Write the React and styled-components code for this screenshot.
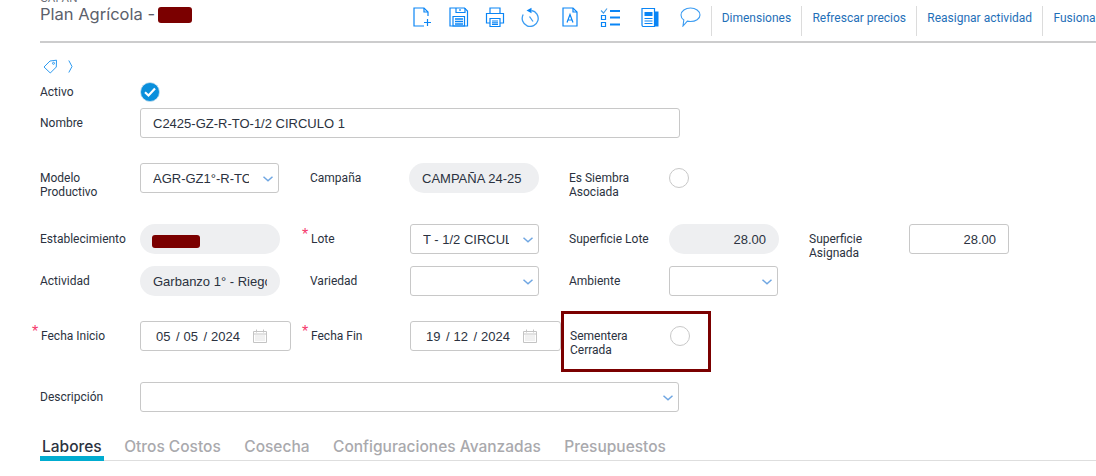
import React from 'react';
import styled, { createGlobalStyle } from 'styled-components';

const GlobalStyle = createGlobalStyle`
    html, body {
        margin: 0;
        padding: 0;
        background: #fff;
        overflow: hidden;
    }
    body {
        width: 1096px;
        height: 476px;
        font-family: "Liberation Sans", Arial, sans-serif;
    }
`;

const BLUE = '#0a85f5';

const IconBase = ({ w = 20, h = 20, children }) => (
    <svg width={w} height={h} viewBox={`0 0 ${w} ${h}`} fill="none" stroke={BLUE} strokeWidth="1.2">
        {children}
    </svg>
);

const NewDocIcon = () => (
    <IconBase>
        <path d="M15 9V5L11 1H1v18h10" />
        <path d="M11 1v4h4" />
        <path d="M14.500 12v7M11 15.500h7" />
    </IconBase>
);

const SaveIcon = () => (
    <IconBase>
        <path d="M1 1h14.500L18.500 4v15H1z" />
        <path d="M7 1v4.500h9V1M11 2v2" />
        <path d="M4 9.500h11.500v9.500H4z" />
        <path d="M6 12h8M6 14.500h8M6 17h8" strokeWidth="1.300" />
    </IconBase>
);

const PrintIcon = () => (
    <IconBase>
        <path d="M5 6.500V1h10v5.500" />
        <path d="M5 16H1.500V6.500h17V16H15" />
        <path d="M5 11.500h10v8H5z" />
        <path d="M7 14h6M7 15.800h6M7 17.500h6" />
    </IconBase>
);

const HistoryIcon = () => (
    <IconBase>
        <path d="M10.500 3.500a8 8 0 1 1-8.300 4" strokeWidth="1.300" stroke="#3b9cf2" />
        <path d="M10.500 .8v5.500L5.500 3.500z" fill={BLUE} stroke="none" />
        <path d="M8.500 9.500l3.500 5" strokeWidth="1.300" stroke="#3b9cf2" />
    </IconBase>
);

const DocAIcon = () => (
    <IconBase w={16}>
        <path d="M1 1h10l4 4v14H1z" />
        <path d="M11 1v4h4" />
        <path d="M5 15.500L8 7.500l3 8M6 13h4" />
    </IconBase>
);

const ChecklistIcon = () => (
    <IconBase>
        <path d="M1 3.500l2.500 2.500L7 1.500" stroke="#4a9fe8" />
        <path d="M1.500 8.500h4v4h-4zM1.500 15.500h4v4h-4z" />
        <path d="M10 4h10M10 10.500h10M10 17.500h10" strokeWidth="2" />
    </IconBase>
);

const DocListIcon = () => (
    <IconBase w={18}>
        <path d="M1 1.500h12.500v18H2.500a1.500 1.500 0 0 1-1.500-1.500z" />
        <path d="M14 4.500h3.500v15H14z" fill={BLUE} stroke="none" />
        <path d="M3.500 5h8v4h-8z" fill={BLUE} stroke="none" />
        <path d="M3.500 11.500h8M3.500 14h8M3.500 16.500h8" />
    </IconBase>
);

const CommentIcon = () => (
    <IconBase w={21}>
        <path d="M10.500 1c5 0 9.500 2.800 9.500 7 0 4-4.500 6.500-9.500 6.500-1.200 0-2.200-.1-3.200-.4L3 19l.8-6C2 11.800 1 10 1 8c0-4.200 4.500-7 9.500-7z" strokeWidth="1.100" stroke="#3b9cf2" />
    </IconBase>
);

const TagIcon = () => (
    <svg width="15" height="15" viewBox="0 0 15 15" fill="none" stroke="#2f9bf0" strokeWidth="1">
        <path d="M1 8l6-6 6.500-.8-.2 6.800-6 6z" />
        <circle cx="10.500" cy="4.300" r="1" />
    </svg>
);

const BreadcrumbChevron = () => (
    <svg width="5" height="13" viewBox="0 0 5 13" fill="none" stroke="#2f9bf0" strokeWidth="1">
        <path d="M.8 .5L4 6.500.8 12.500" />
    </svg>
);

const CheckedIcon = () => (
    <svg width="20" height="20" viewBox="0 0 20 20">
        <circle cx="10" cy="10" r="9.500" fill="#0a8fdc" stroke="#cfe3ef" strokeWidth=".8" />
        <path d="M5 10.300l3.500 3.200L15 6.500" fill="none" stroke="#fff" strokeWidth="2.200" />
    </svg>
);

const CaretIcon = () => (
    <svg width="10" height="6" viewBox="0 0 10 6" fill="none" stroke="#6fa6e2" strokeWidth="1.500">
        <path d="M.5 .8L5 4.800 9.500 .8" />
    </svg>
);

const CalendarIcon = () => (
    <svg width="14" height="14" viewBox="0 0 14 14" fill="none" stroke="#c4c4c4" strokeWidth="1">
        <path d="M.5 2.500h13v11H.5zM3.500 .5v3M10.500 .5v3M.5 5h13" />
        <path d="M2.500 7h9M2.500 9h9M2.500 11h9" strokeDasharray="1 1" />
    </svg>
);

const toolbarIcons = [
    { id: 'new', Icon: NewDocIcon, width: 36 },
    { id: 'save', Icon: SaveIcon, width: 36 },
    { id: 'print', Icon: PrintIcon, width: 36 },
    { id: 'history', Icon: HistoryIcon, width: 41 },
    { id: 'doc', Icon: DocAIcon, width: 38 },
    { id: 'check', Icon: ChecklistIcon, width: 41 },
    { id: 'list', Icon: DocListIcon, width: 39 },
    { id: 'comment', Icon: CommentIcon, width: 30.7 },
];

const actions = ['Dimensiones', 'Refrescar precios', 'Reasignar actividad', 'Fusionar'];
const tabs = ['Labores', 'Otros Costos', 'Cosecha', 'Configuraciones Avanzadas', 'Presupuestos'];

const App = () => {
    return (
        <Page>
            <GlobalStyle />
            <Header>
                <TitleBlock>
                    <Eyebrow>CAPAN</Eyebrow>
                    <Title>Plan Agrícola -<Redacted $w={34} $h={16} $ml={3} /></Title>
                </TitleBlock>
                <Toolbar>
                    {toolbarIcons.map(({ id, Icon, width }) => (
                        <ToolIcon key={id} $w={width}><Icon /></ToolIcon>
                    ))}
                    {actions.map((a) => <ActionLink key={a}>{a}</ActionLink>)}
                </Toolbar>
            </Header>

            <Crumbs>
                <TagIcon />
                <BreadcrumbChevron />
            </Crumbs>

            <ActiveRow>
                <Label>Activo</Label>
                <CheckedIcon />
            </ActiveRow>

            <NameRow>
                <Label>Nombre</Label>
                <Input $w={540}>C2425-GZ-R-TO-1/2 CIRCULO 1</Input>
            </NameRow>

            <FormRow $top={25}>
                <Label $wrap>Modelo Productivo</Label>
                <Select $w={139} value="AGR-GZ1°-R-TO" />
                <Label>Campaña</Label>
                <ReadOnly $w={130} $ml={-1}>CAMPAÑA 24-25</ReadOnly>
                <Label $wrap>Es Siembra Asociada</Label>
                <Radio />
            </FormRow>

            <FormRow $top={31}>
                <Label>Establecimiento</Label>
                <ReadOnly $w={140}><Redacted $w={48} $h={13} $ml={-1} $mt={2} /></ReadOnly>
                <Label $required>Lote</Label>
                <Select $w={129} value="T - 1/2 CIRCULO" />
                <Label>Superficie Lote</Label>
                <ReadOnly $w={110} $right>28.00</ReadOnly>
                <Label $wrap>Superficie Asignada</Label>
                <Input $w={100} $right>28.00</Input>
            </FormRow>

            <FormRow $top={12}>
                <Label>Actividad</Label>
                <ReadOnly $w={140}><Clipped>Garbanzo 1° - Riego</Clipped></ReadOnly>
                <Label>Variedad</Label>
                <Select $w={129} />
                <Label>Ambiente</Label>
                <Select $w={109} />
            </FormRow>

            <FormRow $top={25}>
                <Label $required>Fecha Inicio</Label>
                <DateInput $w={151}>
                    <span>05</span><i>/</i><span>05</span><i>/</i><span>2024</span>
                    <CalendarIcon />
                </DateInput>
                <Label $required>Fecha Fin</Label>
                <DateInput $w={151}>
                    <span>19</span><i>/</i><span>12</span><i>/</i><span>2024</span>
                    <CalendarIcon />
                </DateInput>
                <Highlight>
                    <HighlightLabel>Sementera Cerrada</HighlightLabel>
                    <Radio />
                </Highlight>
            </FormRow>

            <FormRow $top={31}>
                <Label>Descripción</Label>
                <WideCell><Select $w={539} /></WideCell>
            </FormRow>

            <Tabs>
                {tabs.map((t, i) => <Tab key={t} $active={i === 0}>{t}</Tab>)}
            </Tabs>
        </Page>
    );
};

const Page = styled.div`
    width: 1096px;
    height: 476px;
    padding-left: 40px;
    box-sizing: border-box;
    overflow: hidden;
    color: #2b3240;
`;

const Header = styled.div`
    height: 41px;
    display: flex;
    border-bottom: 2px solid #cccccd;
    overflow: hidden;
`;

const TitleBlock = styled.div`
    width: 373px;
    flex: none;
    margin-top: -8px;
`;

const Eyebrow = styled.div`
    font: 11px/13px "Inter", sans-serif;
    color: #6c7079;
`;

const Title = styled.div`
    display: flex;
    align-items: center;
    font: 16.500px/19px "Inter", sans-serif;
    color: #5b606b;
`;

const Redacted = styled.span`
    display: block;
    width: ${(p) => p.$w}px;
    height: ${(p) => p.$h}px;
    margin-left: ${(p) => p.$ml || 0}px;
    margin-top: ${(p) => p.$mt || 0}px;
    background: #7b0000;
    border-radius: 3px;
`;

const Toolbar = styled.div`
    display: flex;
    flex: none;
    height: 36px;
    align-items: flex-start;
    padding-top: 6px;
`;

const ToolIcon = styled.div`
    width: ${(p) => p.$w}px;
    height: 24px;
    flex: none;
    padding-top: 1px;
    box-sizing: border-box;
`;

const ActionLink = styled.div`
    height: 25px;
    padding: 5px 10.300px 0 10px;
    font: 12px/14px "Roboto", sans-serif;
    color: #1f6fb8;
    white-space: nowrap;
    border-left: 1px solid #dcdcdc;
    flex: none;
`;

const Crumbs = styled.div`
    height: 15px;
    margin: 16px 0 0 3px;
    display: flex;
    align-items: center;
    gap: 10px;
`;

const ActiveRow = styled.div`
    height: 20px;
    margin-top: 8px;
    display: grid;
    grid-template-columns: 100px auto;
    justify-content: start;
    align-items: center;
`;

const NameRow = styled.div`
    height: 30px;
    margin-top: 6px;
    display: grid;
    grid-template-columns: 100px auto;
    justify-content: start;
    align-items: center;
`;

const FormRow = styled.div`
    height: 30px;
    margin-top: ${(p) => p.$top}px;
    display: grid;
    grid-template-columns: 100px 170px 100px 159px 100px 140px 100px 100px;
    grid-template-rows: 30px;
    align-items: center;
`;

const Label = styled.div`
    position: relative;
    font: 12px/14px "Roboto", sans-serif;
    color: #2b3240;
    ${(p) => p.$wrap && 'width: 70px; align-self: start; padding-top: 8px;'}
    ${(p) => p.$required && `
        padding-left: 1px;
        &::before {
            content: "*";
            position: absolute;
            left: -8px;
            top: -5px;
            color: #f5386a;
            font: 16px/16px "Liberation Sans", sans-serif;
        }
    `}
`;

const Control = styled.div`
    width: ${(p) => p.$w}px;
    height: 30px;
    box-sizing: border-box;
    display: flex;
    align-items: center;
    padding: 2px 12px 0;
    font: 13px/16px "Liberation Sans", Arial, sans-serif;
    color: #2b3240;
    white-space: nowrap;
    overflow: hidden;
`;

const Input = styled(Control)`
    border: 1px solid #c8c8c8;
    border-radius: 3px;
    ${(p) => p.$right && 'justify-content: flex-end;'}
`;

const ReadOnly = styled(Control)`
    background: #eeeff1;
    border-radius: 15px;
    padding: 2px 13px 0;
    margin-left: ${(p) => p.$ml || 0}px;
    ${(p) => p.$right && 'justify-content: flex-end;'}
`;

const Clipped = styled.span`
    display: block;
    width: 115px;
    overflow: hidden;
`;

const SelectBox = styled(Input)`
    justify-content: space-between;
    padding-right: 5px;
    span {
        display: block;
        width: calc(100% - 24px);
        overflow: hidden;
    }
    svg {
        flex: none;
    }
`;

const Select = ({ $w, value }) => (
    <SelectBox $w={$w}>
        <span>{value}</span>
        <CaretIcon />
    </SelectBox>
);

const DateInput = styled(Input)`
    padding-left: 15px;
    span {
        display: block;
    }
    i {
        font-style: normal;
        margin: 0 3.900px 0 5.500px;
    }
    svg {
        flex: none;
        margin: -2px 0 0 13px;
    }
`;

const Radio = styled.div`
    width: 20px;
    height: 20px;
    box-sizing: border-box;
    border: 1px solid #c8c8c8;
    border-radius: 50%;
    background: #fff;
`;

const Highlight = styled.div`
    grid-column: span 2;
    align-self: start;
    width: 150px;
    height: 61px;
    box-sizing: border-box;
    margin: -10px 0 -21px -8px;
    border: 3px solid #7b0000;
    display: flex;
    align-items: flex-start;
    padding: 12px 0 0 6px;
`;

const HighlightLabel = styled.div`
    width: 100px;
    padding-top: 3px;
    font: 12px/14px "Roboto", sans-serif;
    color: #2b3240;
`;

const WideCell = styled.div`
    grid-column: span 5;
`;

const Tabs = styled.div`
    margin-top: 21px;
    height: 28px;
    display: flex;
    gap: 23.500px;
    border-bottom: 1px solid #dedede;
    box-sizing: border-box;
`;

const Tab = styled.div`
    height: 28px;
    font: 500 15.500px/27px "Inter", sans-serif;
    color: ${(p) => (p.$active ? '#2b3240' : '#a9a9ad')};
    padding: 0 ${(p) => (p.$active ? '2px' : '0')};
    ${(p) => p.$active && 'margin-right: -3px; border-bottom: 5px solid #00acd0; box-sizing: border-box;'}
`;

export default App;
